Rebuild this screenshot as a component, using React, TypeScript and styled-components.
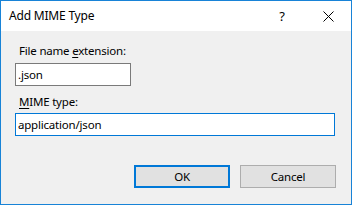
import React from "react"
import styled, { createGlobalStyle } from "styled-components"

const GlobalStyle = createGlobalStyle`
  html, body {
    margin: 0;
    padding: 0;
    background: #f0f0f0;
    overflow: hidden;
  }
  * { box-sizing: border-box; }
`

const Window = styled.div`
  width: 352px;
  height: 205px;
  border: 1px solid #1883d7;
  display: flex;
  flex-direction: column;
  background: #f0f0f0;
  font-family: "Noto Sans", "Segoe UI", sans-serif;
  font-size: 11.5px;
  letter-spacing: -0.2px;
  color: #000;
`

const TitleBar = styled.div`
  height: 30px;
  flex: none;
  background: #fff;
  display: flex;
  align-items: center;
`

const Title = styled.div`
  flex: 1;
  padding-left: 8px;
  font-size: 12px;
  line-height: 16px;
  margin-top: -1px;
`

const CaptionButton = styled.div`
  width: 46px;
  height: 30px;
  display: flex;
  align-items: center;
  justify-content: center;
`

const HelpGlyph = styled.span`
  font-size: 13px;
  line-height: 16px;
  margin-top: -1px;
`

const Body = styled.div`
  flex: 1;
  display: flex;
  flex-direction: column;
  padding: 12px 16px 0 14px;
`

const Label = styled.label<{ $gap: number }>`
  display: block;
  line-height: 16px;
  margin-bottom: ${p => p.$gap}px;
  padding-left: 4px;
  u { text-decoration-thickness: 1px; text-underline-offset: 2px; }
`

const TextBox = styled.input<{ $width: number; $focused?: boolean }>`
  width: ${p => p.$width}px;
  height: 23px;
  border: 1px solid ${p => (p.$focused ? "#0078d7" : "#7a7a7a")};
  background: #fff;
  padding: 0 2px;
  margin: 0 0 ${p => (p.$focused ? 0 : 8)}px 0;
  font: inherit;
  letter-spacing: inherit;
  color: #000;
  outline: none;
`

const ButtonRow = styled.div`
  display: flex;
  justify-content: flex-end;
  gap: 10px;
  margin-top: 29px;
  margin-right: -1px;
`

const Button = styled.button<{ $default?: boolean }>`
  width: 96px;
  height: 23px;
  background: #e1e1e1;
  border: ${p => (p.$default ? "2px solid #0078d7" : "1px solid #adadad")};
  font: inherit;
  letter-spacing: inherit;
  color: #000;
  padding: 0;
  line-height: 16px;
`

export default function App() {
  return (
    <>
      <GlobalStyle />
      <Window>
        <TitleBar>
          <Title>Add MIME Type</Title>
          <CaptionButton>
            <HelpGlyph>?</HelpGlyph>
          </CaptionButton>
          <CaptionButton>
            <svg width="11" height="11" viewBox="0 0 11 11">
              <path d="M0.5 0.5L10.5 10.5M10.5 0.5L0.5 10.5" stroke="#000" strokeWidth="1" fill="none" />
            </svg>
          </CaptionButton>
        </TitleBar>
        <Body>
          <Label $gap={4}>File name <u>e</u>xtension:</Label>
          <TextBox $width={116} defaultValue=".json" readOnly />
          <Label $gap={3}><u>M</u>IME type:</Label>
          <TextBox $width={320} $focused defaultValue="application/json" readOnly />
          <ButtonRow>
            <Button $default>OK</Button>
            <Button>Cancel</Button>
          </ButtonRow>
        </Body>
      </Window>
    </>
  )
}
